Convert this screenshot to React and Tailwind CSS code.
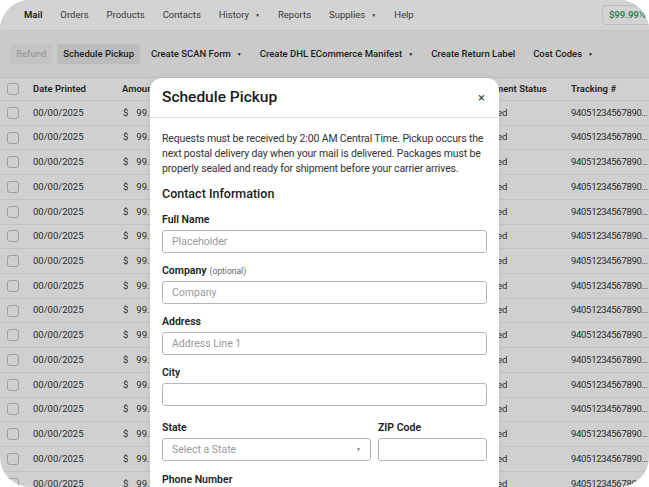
import React from "react";

const navItems = [
  { label: "Mail", active: true },
  { label: "Orders" },
  { label: "Products" },
  { label: "Contacts" },
  { label: "History", caret: true },
  { label: "Reports" },
  { label: "Supplies", caret: true },
  { label: "Help" },
];

const actions = [
  { label: "Create SCAN Form", caret: true },
  { label: "Create DHL ECommerce Manifest", caret: true },
  { label: "Create Return Label" },
  { label: "Cost Codes", caret: true },
];

const rows = Array.from({ length: 16 });

function Caret() {
  return <span className="ml-[6px] inline-block text-[5px] leading-none align-middle">▼</span>;
}

function Label({ children, extra }) {
  return (
    <label className="text-[10.5px] font-semibold text-[#222] h-[15px] leading-[15px] whitespace-nowrap">
      {children}
      {extra && <span className="ml-[3px] text-[8.5px] font-normal text-[#666]">{extra}</span>}
    </label>
  );
}

function Field({ label, extra, placeholder, className = "" }) {
  return (
    <div className={"flex flex-col " + className}>
      <Label extra={extra}>{label}</Label>
      <div className="mt-[3px] h-[23px] rounded-[3px] border border-[#b5b5b5] px-[9px] flex items-center text-[10.5px] text-[#9a9a9a]">
        {placeholder}
      </div>
    </div>
  );
}

export default function App() {
  return (
    <div className="w-[649px] h-[487px] bg-white" style={{ fontFamily: "Roboto, 'Noto Sans', sans-serif" }}>
      <div className="relative w-full h-full rounded-[30px] overflow-hidden bg-[#d0d0d0] text-[#222]">
        {/* top nav */}
        <div className="h-[31px] bg-[#d3d3d3] border-b border-[#c4c4c4] flex items-center pl-[24px] text-[9.5px] whitespace-nowrap">
          <div className="flex items-center gap-[18px]">
            {navItems.map((n) => (
              <span key={n.label} className={n.active ? "font-semibold text-[#1a1a1a]" : "text-[#3a3a3a]"}>
                {n.label}
                {n.caret && <Caret />}
              </span>
            ))}
          </div>
          <div className="ml-auto mr-[-8px] h-[20px] pl-[6px] pr-[10px] rounded-[4px] border border-[#bdbdbd] flex items-center text-[9.5px] font-semibold text-[#2f7d4c]">
            $99.99½
          </div>
        </div>

        {/* toolbar */}
        <div className="h-[47px] bg-[#cacaca] border-b border-[#c0c0c0] flex items-center pl-[10px] text-[9.5px] font-medium whitespace-nowrap">
          <span className="h-[20px] px-[6px] rounded-[3px] bg-[#c4c4c4] text-[#9c9c9c] flex items-center">Refund</span>
          <span className="ml-[5px] h-[20px] px-[6px] rounded-[3px] bg-[#bcbcbc] text-[#1c1c1c] flex items-center">Schedule Pickup</span>
          <div className="ml-[11px] flex items-center gap-[18px] text-[#1c1c1c]">
            {actions.map((a) => (
              <span key={a.label}>
                {a.label}
                {a.caret && <Caret />}
              </span>
            ))}
          </div>
        </div>

        {/* table */}
        <div className="text-[9.5px] whitespace-nowrap">
          <div className="h-[23px] grid grid-cols-[33px_89px_354px_95px_1fr] items-center border-b border-[#c2c2c2] font-semibold">
            <span className="ml-[7px] w-[12px] h-[12px] rounded-[3px] border border-[#9e9e9e]" />
            <span>Date Printed</span>
            <span>Amount</span>
            <span>Shipment Status</span>
            <span>Tracking #</span>
          </div>
          {rows.map((_, i) => (
            <div key={i} className="h-[24.73px] grid grid-cols-[33px_89px_354px_95px_1fr] items-center border-b border-[#c2c2c2] text-[#2a2a2a]">
              <span className="ml-[7px] w-[12px] h-[12px] rounded-[3px] border border-[#9e9e9e]" />
              <span>00/00/2025</span>
              <span className="pl-[1px]">$<span className="ml-[8px]">99.99</span></span>
              <span className="pl-[1px]">Printed</span>
              <span className="tracking-[-0.3px]">94051234567890…</span>
            </div>
          ))}
        </div>

        {/* modal */}
        <div className="absolute left-[150px] top-[78px] w-[349px] h-[430px] bg-white rounded-t-[12px] shadow-[0_0_6px_rgba(0,0,0,0.08)]">
          <div className="h-[40px] border-b border-[#e2e2e2] flex items-center px-[12px]">
            <span className="text-[15.5px] font-medium text-[#1a1a1a] mt-[1px]">Schedule Pickup</span>
            <span className="ml-auto mr-[2px] text-[13px] text-[#444] leading-none">×</span>
          </div>
          <div className="px-[12px] pt-[13px]">
            <p className="text-[10.5px] leading-[15px] tracking-[-0.15px] text-[#333]">
              Requests must be received by 2:00 AM Central Time. Pickup occurs the next postal delivery day when your mail is delivered. Packages must be properly sealed and ready for shipment before your carrier arrives.
            </p>
            <div className="mt-[10px] h-[16px] leading-[16px] text-[12.5px] font-medium text-[#1a1a1a]">Contact Information</div>
            <div className="mt-[10px] flex flex-col gap-[10px]">
              <Field label="Full Name" placeholder="Placeholder" />
              <Field label="Company" extra="(optional)" placeholder="Company" />
              <Field label="Address" placeholder="Address Line 1" />
              <Field label="City" placeholder="" />
              <div className="mt-[4px] flex gap-[7px]">
                <div className="flex flex-col w-[209px]">
                  <Label>State</Label>
                  <div className="mt-[3px] h-[23px] rounded-[3px] border border-[#b5b5b5] px-[9px] flex items-center text-[10.5px] text-[#9a9a9a]">
                    Select a State
                    <span className="ml-auto text-[5px] text-[#777]">▼</span>
                  </div>
                </div>
                <Field label="ZIP Code" placeholder="" className="flex-1" />
              </div>
              <div className="-mt-[5px]">
                <Label>Phone Number</Label>
              </div>
            </div>
          </div>
        </div>
      </div>
    </div>
  );
}
